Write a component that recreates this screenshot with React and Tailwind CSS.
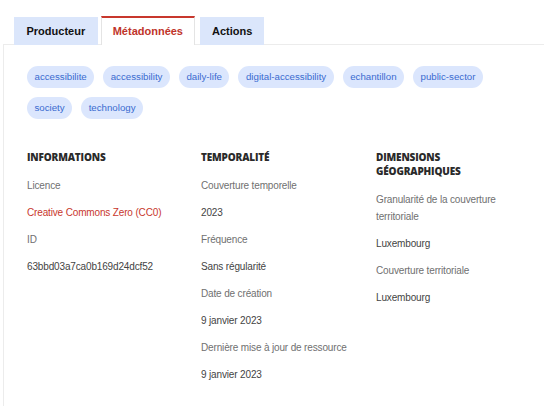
const tags = ['accessibilite', 'accessibility', 'daily-life', 'digital-accessibility', 'echantillon', 'public-sector', 'society', 'technology'];

const Item = ({ label, value, red }) => (
  <div className="flex flex-col gap-[10px]">
    <div className="text-[#707070] leading-[17px]">{label}</div>
    <div className={`leading-[17px] ${red ? 'text-[#c8372d]' : 'text-[#444]'}`}>{value}</div>
  </div>
);

const Heading = ({ children }) => (
  <h3 className="font-['Open_Sans',sans-serif] font-extrabold text-[10px] leading-[14px] uppercase text-[#2a2a2a] mb-[13px]">{children}</h3>
);

export default function App() {
  return (
    <div className="w-[544px] h-[406px] bg-white overflow-hidden font-['Liberation_Sans',Arial,sans-serif] text-[10px] tracking-[-0.15px]">
      <div className="pt-[16px] pl-[3px]">
        <div className="flex items-end pl-[11px] gap-[3px] relative z-10 -mb-px tracking-normal">
          <button className="h-[28px] px-[12.5px] bg-[#dbe6fb] text-[11px] font-bold text-[#111]">Producteur</button>
          <button className="h-[29px] px-[11px] bg-white border-t-2 border-t-[#c8372d] border-x border-x-[#e4e4e4] text-[11px] font-bold text-[#c0342a]">Métadonnées</button>
          <button className="h-[28px] px-[12px] ml-[2px] bg-[#dbe6fb] text-[11px] font-bold text-[#111]">Actions</button>
        </div>
        <div className="border-t border-l border-[#ececec] h-[400px] pl-[23px] pt-[21px]">
          <div className="flex flex-wrap gap-x-[9px] gap-y-[9px] w-[500px] tracking-normal">
            {tags.map((t) => (
              <span key={t} className="h-[22px] px-[7.5px] rounded-full bg-[#dbe6fd] text-[#3a6bd0] flex items-center text-[9.7px]">{t}</span>
            ))}
          </div>
          <div className="grid grid-cols-[174px_175px_1fr] mt-[31px]">
            <div>
              <Heading>Informations</Heading>
              <div className="flex flex-col gap-[10px]">
                <Item label="Licence" value="Creative Commons Zero (CC0)" red />
                <Item label="ID" value="63bbd03a7ca0b169d24dcf52" />
              </div>
            </div>
            <div>
              <Heading>Temporalité</Heading>
              <div className="flex flex-col gap-[10px]">
                <Item label="Couverture temporelle" value="2023" />
                <Item label="Fréquence" value="Sans régularité" />
                <Item label="Date de création" value="9 janvier 2023" />
                <Item label="Dernière mise à jour de ressource" value="9 janvier 2023" />
              </div>
            </div>
            <div>
              <Heading>Dimensions<br />géographiques</Heading>
              <div className="flex flex-col gap-[10px] w-[135px]">
                <Item label="Granularité de la couverture territoriale" value="Luxembourg" />
                <Item label="Couverture territoriale" value="Luxembourg" />
              </div>
            </div>
          </div>
        </div>
      </div>
    </div>
  );
}
